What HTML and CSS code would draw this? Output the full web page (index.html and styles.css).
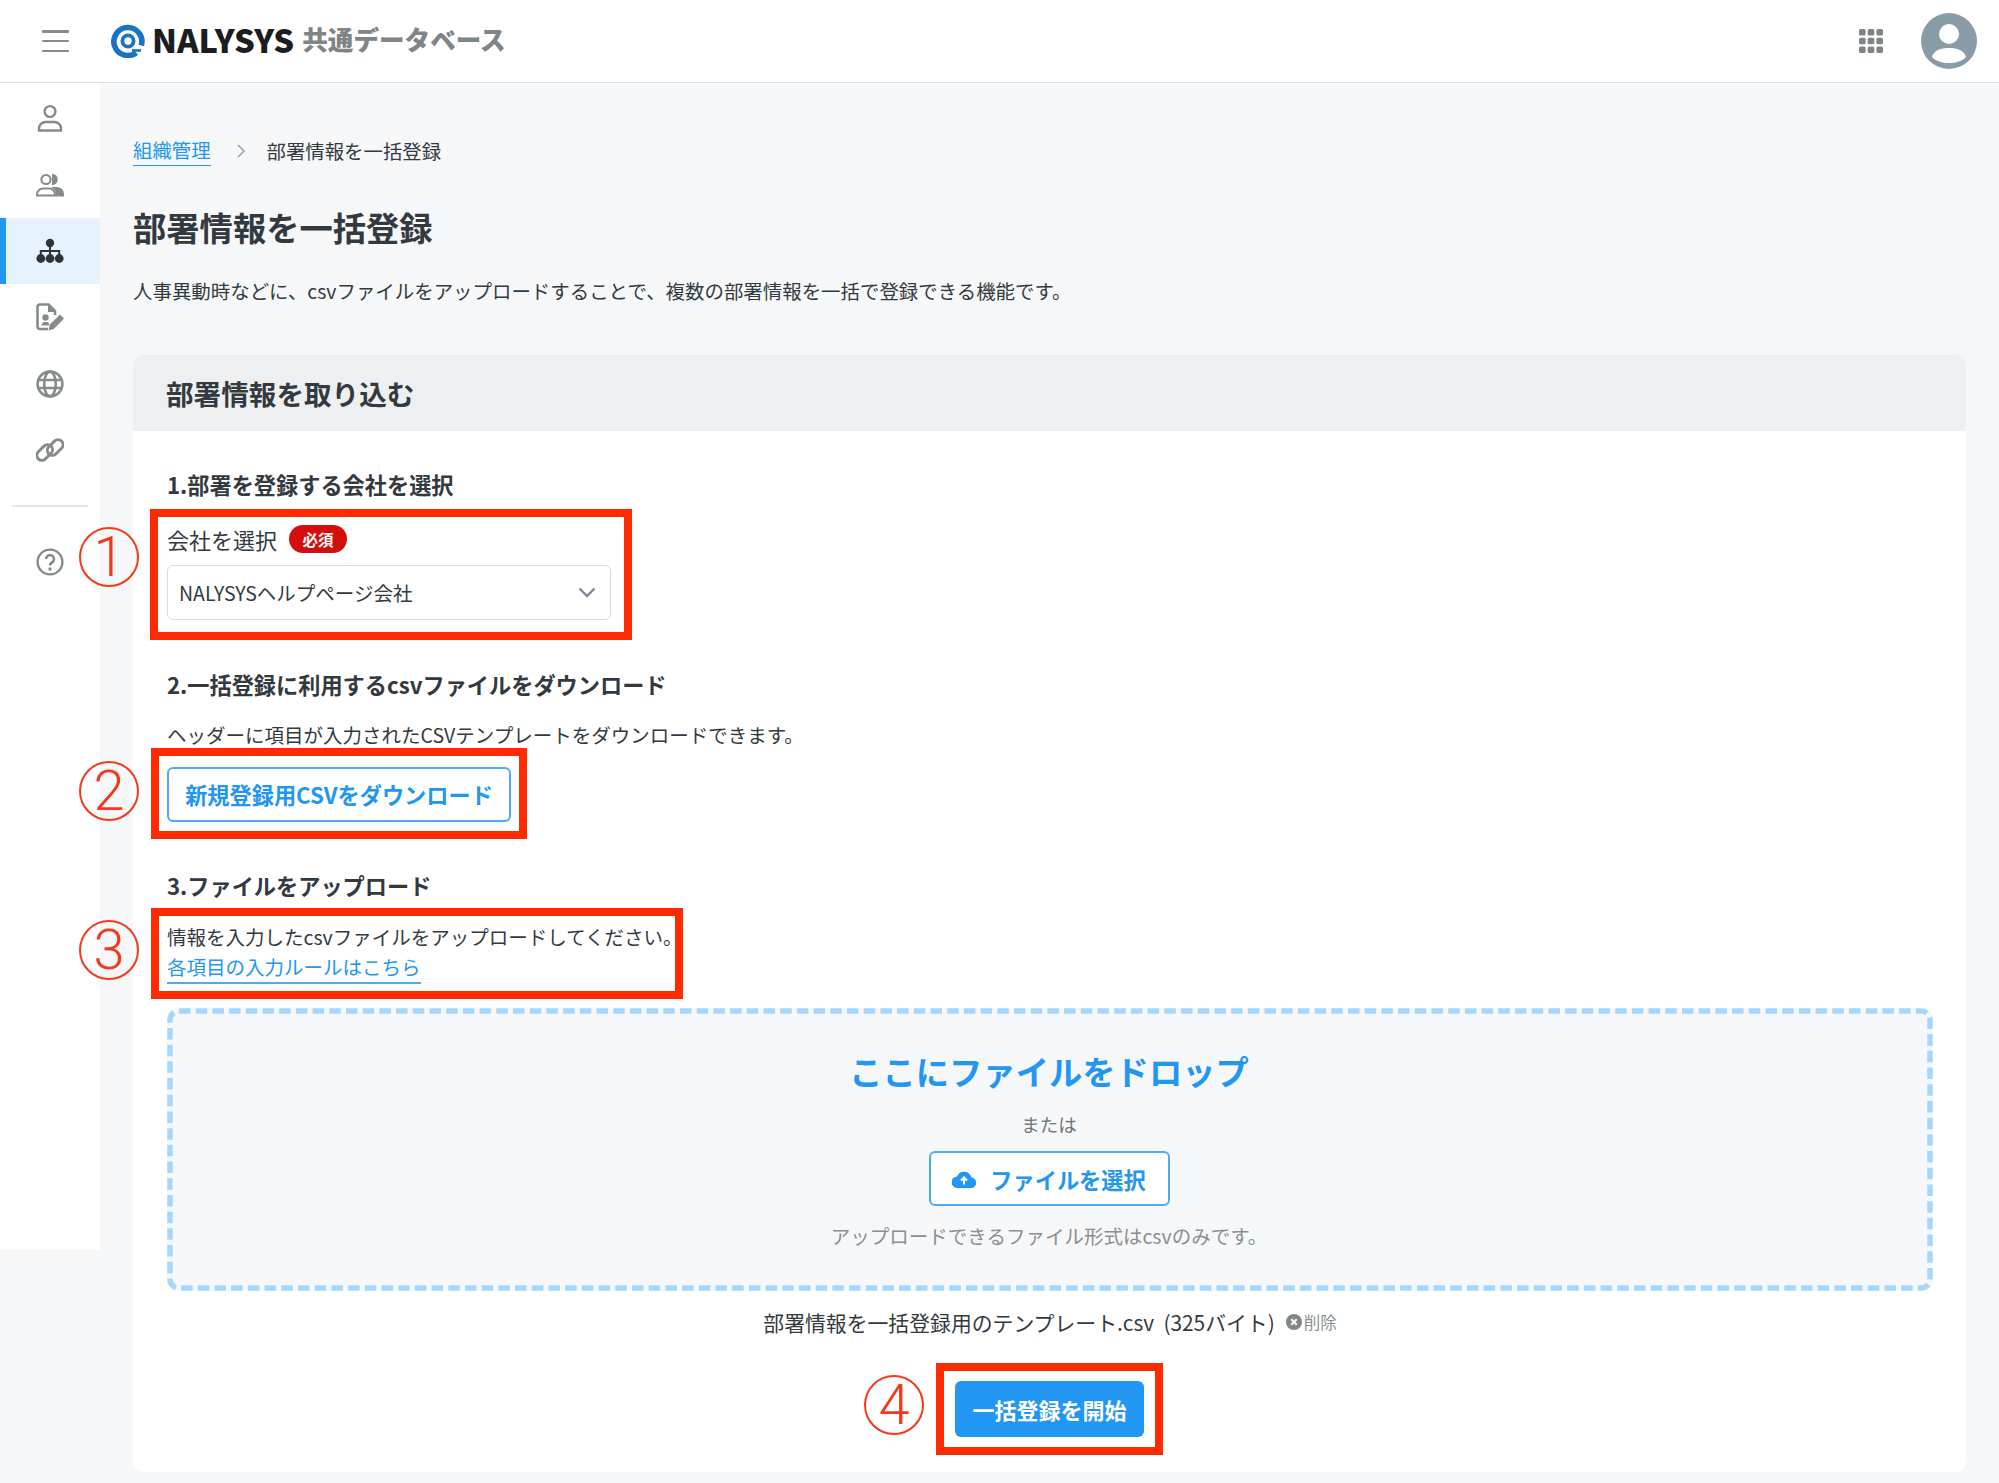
FILE: index.html
```html
<!DOCTYPE html>
<html lang="ja">
<head>
<meta charset="utf-8">
<title>部署情報を一括登録</title>
<link rel="stylesheet" href="styles.css">
</head>
<body>
<div class="stage">
  <header class="topbar">
    <button class="menu-btn" aria-label="menu"><span></span><span></span><span></span></button>
    <div class="brand">
      <svg class="brand-mark" viewBox="0 0 34 34"><path d="M25.300 28.700A14 14 0 1 1 30.300 21.500" fill="none" stroke="#1a73c4" stroke-width="5.600"/><circle cx="17" cy="17" r="5.600" fill="none" stroke="#1a73c4" stroke-width="3.800"/><path d="M21 26.500h9" stroke="#1a73c4" stroke-width="2.600"/></svg>
      <span class="brand-name">NALYSYS</span>
      <span class="brand-sub">共通データベース</span>
    </div>
    <div class="top-right">
      <svg class="apps" viewBox="0 0 24 24" fill="#7d8587"><rect x="0" y="0" width="6.600" height="6.600" rx="1.600"/><rect x="8.700" y="0" width="6.600" height="6.600" rx="1.600"/><rect x="17.400" y="0" width="6.600" height="6.600" rx="1.600"/><rect x="0" y="8.700" width="6.600" height="6.600" rx="1.600"/><rect x="8.700" y="8.700" width="6.600" height="6.600" rx="1.600"/><rect x="17.400" y="8.700" width="6.600" height="6.600" rx="1.600"/><rect x="0" y="17.400" width="6.600" height="6.600" rx="1.600"/><rect x="8.700" y="17.400" width="6.600" height="6.600" rx="1.600"/><rect x="17.400" y="17.400" width="6.600" height="6.600" rx="1.600"/></svg>
      <svg class="avatar" viewBox="0 0 56 56"><circle cx="28" cy="28" r="28" fill="#8a9ba8"/><circle cx="28" cy="21" r="10" fill="#fff"/><path d="M11 44c2-7 9-9 17-9s15 2 17 9c-4 4-10 6-17 6s-13-2-17-6z" fill="#fff"/></svg>
    </div>
  </header>
  <div class="shell">
    <nav class="sidebar">
      <a class="nav-item"><svg class="nav-icon" viewBox="0 0 28 28" fill="none" stroke="#858b8d" stroke-width="2.400"><circle cx="14" cy="7.500" r="5.400"/><path d="M3 26.500v-1.800a6.700 6.700 0 0 1 6.700-6.700h8.600a6.700 6.700 0 0 1 6.700 6.700v1.800z"/></svg></a>
      <a class="nav-item"><svg class="nav-icon" viewBox="0 0 28 28" fill="none" stroke="#858b8d" stroke-width="2"><circle cx="10" cy="8.500" r="4.600"/><path d="M1 24.500v-1a6 6 0 0 1 6-6h6a6 6 0 0 1 6 6v1z"/><path d="M17 4a4.600 4.600 0 0 1 0 9z" fill="#858b8d"/><path d="M18 17h3a6 6 0 0 1 6 6v1.500h-6c0-3-1-6-3-7.500z" fill="#858b8d"/></svg></a>
      <a class="nav-item is-active"><svg class="nav-icon" viewBox="0 0 28 28" fill="#2f3438"><circle cx="14" cy="6" r="4.200"/><circle cx="4.800" cy="21.500" r="4.400"/><circle cx="14" cy="21.500" r="4.400"/><circle cx="23.200" cy="21.500" r="4.400"/><path d="M13 9h2v4h9.200v5h-2v-3H15v3h-2v-3H5.800v3h-2v-5H13z"/></svg></a>
      <a class="nav-item"><svg class="nav-icon" viewBox="0 0 28 28" fill="none"><path d="M12 26H4A2.500 2.500 0 0 1 1.500 23.500V4A2.500 2.500 0 0 1 4 1.500h8.500l6.500 6.500v4" stroke="#858b8d" stroke-width="2.600"/><path d="M12 1.500v7.500h7z" fill="#858b8d"/><circle cx="9.500" cy="14.500" r="3.200" fill="#858b8d"/><path d="M5 22.500l2.500-3.500h4.500l1.500 3.500z" fill="#858b8d"/><path d="M12.500 27.500l1.300-6L24 11.500l4 4L17.800 26z" fill="#858b8d"/></svg></a>
      <a class="nav-item"><svg class="nav-icon" viewBox="0 0 28 28" fill="none" stroke="#858b8d" stroke-width="2.600"><circle cx="14" cy="14" r="12.400"/><ellipse cx="14" cy="14" rx="5.800" ry="12.400"/><path d="M2.500 10h23M2.500 18h23"/></svg></a>
      <a class="nav-item"><svg class="nav-icon" viewBox="0 0 28 28" fill="none" stroke="#858b8d" stroke-width="2.900"><rect x="-9" y="-5" width="18" height="10" rx="5" transform="translate(8.700 16.500) rotate(-45)"/><rect x="-9" y="-5" width="18" height="10" rx="5" transform="translate(19.200 11.500) rotate(-45)"/></svg></a>
      <div class="nav-divider"></div>
      <a class="nav-item nav-help"><svg class="nav-icon" viewBox="0 0 28 28" fill="none" stroke="#858b8d" stroke-width="2.400"><circle cx="14" cy="14" r="12.400"/><path d="M10 11a4 4 0 1 1 6 3.500c-1.400.8-2 1.500-2 3" stroke-width="2.600"/><circle cx="14" cy="21" r="1.700" fill="#858b8d" stroke="none"/></svg></a>
    </nav>
    <main class="content">
      <div class="crumbs"><a class="crumb-link">組織管理</a><svg class="crumb-sep" viewBox="0 0 8 14" fill="none" stroke="#9aa0a4" stroke-width="1.500"><path d="M1 1l6 6-6 6"/></svg><span>部署情報を一括登録</span></div>
      <h1 class="page-title">部署情報を一括登録</h1>
      <p class="page-desc">人事異動時などに、csvファイルをアップロードすることで、複数の部署情報を一括で登録できる機能です。</p>
      <section class="card">
        <h2 class="card-head">部署情報を取り込む</h2>
        <div class="card-body">
          <h3 class="step step-1">1.部署を登録する会社を選択</h3>
          <div class="field-label"><span>会社を選択</span><span class="required">必須</span></div>
          <div class="select"><span>NALYSYSヘルプページ会社</span><svg class="chev" viewBox="0 0 18 11" fill="none" stroke="#7d8b96" stroke-width="2.400"><path d="M1.500 1.500L9 9l7.500-7.500"/></svg></div>
          <h3 class="step step-2">2.一括登録に利用するcsvファイルをダウンロード</h3>
          <p class="step-text step-text-2">ヘッダーに項目が入力されたCSVテンプレートをダウンロードできます。</p>
          <a class="btn btn-outline btn-download">新規登録用CSVをダウンロード</a>
          <h3 class="step step-3">3.ファイルをアップロード</h3>
          <p class="step-text step-text-3">情報を入力したcsvファイルをアップロードしてください。</p>
          <p class="rule-line"><a class="rule-link">各項目の入力ルールはこちら</a></p>
          <div class="dropzone">
            <svg class="dash" width="1766" height="283"><rect x="3" y="3" width="1760" height="277" rx="9" fill="none" stroke="#a6d6fb" stroke-width="5.500" stroke-dasharray="11.500 5.200"/></svg>
            <div class="drop-title">ここにファイルをドロップ</div>
            <div class="drop-or">または</div>
            <a class="btn btn-outline btn-file"><svg class="cloud" viewBox="0 0 24 18"><path d="M19.300 7.600A7.500 7.500 0 0 0 5 6.400 5.700 5.700 0 0 0 5.700 18h13a5 5 0 0 0 .6-10.400z" fill="#2196f3"/><path d="M12 14.500v-6M9 10.500l3-3 3 3" stroke="#fff" stroke-width="2" fill="none"/></svg><span>ファイルを選択</span></a>
            <div class="drop-note">アップロードできるファイル形式はcsvのみです。</div>
          </div>
          <div class="file-line"><span>部署情報を一括登録用のテンプレート.csv &nbsp;(325バイト)</span><svg class="del-icon" viewBox="0 0 16 16"><circle cx="8" cy="8" r="8" fill="#80868a"/><path d="M5.300 5.300l5.400 5.400M10.700 5.300l-5.400 5.400" stroke="#fff" stroke-width="2"/></svg><span class="del-text">削除</span></div>
          <div class="submit-row"><a class="btn btn-primary">一括登録を開始</a></div>
        </div>
      </section>
    </main>
  </div>
  <div class="mark box-1"></div><div class="num num-1">1</div>
  <div class="mark box-2"></div><div class="num num-2">2</div>
  <div class="mark box-3"></div><div class="num num-3">3</div>
  <div class="mark box-4"></div><div class="num num-4">4</div>
</div>
</body>
</html>
```
FILE: styles.css
```css
* { box-sizing: border-box; }
html, body { margin: 0; padding: 0; }
body { background: #f6f7f9; color: #333a3f; font-family: "Noto Sans CJK JP", "Noto Sans", sans-serif; }
h1, h2, h3, p { margin: 0; }
.stage { position: relative; width: 1999px; height: 1483px; overflow: hidden; }

.topbar { height: 83px; background: #fff; border-bottom: 1px solid #d9e0e6; display: flex; align-items: center; padding: 0 22px 0 42px; }
.menu-btn { width: 27px; height: 22px; padding: 0; border: 0; background: none; display: flex; flex-direction: column; justify-content: space-between; }
.menu-btn span { display: block; height: 2.500px; background: #858b8d; border-radius: 1px; }
.brand { display: flex; align-items: center; margin-left: 42px; }
.brand-mark { width: 34px; height: 34px; }
.brand-name { margin: 0 0 5px 7px; font-size: 32.700px; font-weight: 900; color: #1b1d20; line-height: 40px; }
.brand-sub { margin: 0 0 4px 8px; font-size: 25.600px; font-weight: 900; color: #7f8487; line-height: 40px; }
.top-right { margin-left: auto; display: flex; align-items: center; gap: 38px; }
.apps { width: 24px; height: 24px; }
.avatar { width: 56px; height: 56px; }

.shell { display: flex; align-items: flex-start; }
.sidebar { width: 100px; height: 1167px; background: #fff; padding-top: 2px; flex: none; }
.nav-item { height: 66.400px; display: flex; align-items: center; justify-content: center; border-left: 6px solid transparent; padding-right: 6px; }
.nav-item.is-active { background: #e6f3fe; border-left-color: #2196f3; }
.nav-icon { width: 28px; height: 28px; }
.nav-divider { height: 2px; margin: 22px 12px 0; background: #dde6ec; }
.nav-help { margin-top: 21px; }

.content { flex: 1; min-width: 0; padding: 53px 33px 0; }
.crumbs { display: flex; align-items: center; font-size: 19.400px; line-height: 28px; }
.crumb-link { color: #2196f3; border-bottom: 1.500px solid #2196f3; line-height: 28px; height: 30px; }
.crumb-sep { width: 8px; height: 14px; margin: 0 22px 0 26px; }
.page-title { margin-top: 39px; font-size: 33.300px; font-weight: 700; line-height: 44px; }
.page-desc { margin-top: 28px; font-size: 19.450px; line-height: 28px; }

.card { margin-top: 49.500px; background: #fff; border-radius: 10px; overflow: hidden; }
.card-head { height: 76px; padding-left: 33px; background: #eeeff1; font-size: 27.600px; font-weight: 700; line-height: 76px; }
.card-body { padding: 38px 33px 34.500px 34px; }
.step { font-size: 22.200px; font-weight: 700; line-height: 30px; }
.step-2 { margin-top: 49px; }
.step-3 { margin-top: 48px; }
.field-label { margin-top: 25px; display: flex; align-items: center; font-size: 22px; line-height: 30px; }
.required { margin-left: 12px; width: 58px; height: 28px; border-radius: 14px; background: #d40d0d; color: #fff; font-size: 15.500px; font-weight: 700; line-height: 28px; text-align: center; }
.select { margin-top: 11px; width: 444px; height: 55px; padding: 0 14px 0 11px; border: 1.500px solid #d5dce2; border-radius: 6px; background: #fff; display: flex; align-items: center; justify-content: space-between; font-size: 19.500px; }
.chev { width: 18px; height: 11px; }
.step-text { font-size: 19.500px; line-height: 28px; }
.step-text-2 { margin-top: 22px; }
.step-text-3 { margin-top: 22px; line-height: 30px; }
.rule-line { font-size: 19.500px; line-height: 30px; height: 31px; }
.rule-link { color: #2196f3; display: inline-block; height: 32px; border-bottom: 2px solid #4eaaf5; }

.btn { display: inline-flex; align-items: center; justify-content: center; border-radius: 6px; font-weight: 700; }
.btn-outline { background: #fff; border: 2px solid #4eaaf5; color: #2196f3; }
.btn-download { margin-top: 18px; width: 344px; height: 55px; font-size: 22.200px; }
.btn-file { width: 241px; height: 55px; font-size: 22.200px; gap: 14px; margin-top: 14px; }
.cloud { width: 24px; height: 18px; }
.btn-primary { width: 189px; height: 56px; background: #2196f3; color: #fff; font-size: 22px; }

.dropzone { position: relative; margin-top: 25px; height: 283px; padding: 38.500px 2px 0 0; border-radius: 10px; background: #f6f7f9; display: flex; flex-direction: column; align-items: center; }
.dash { position: absolute; left: 0; top: 0; }
.drop-title { font-size: 33.300px; font-weight: 700; line-height: 50px; color: #2196f3; }
.drop-or { margin-top: 15px; font-size: 18.500px; line-height: 26px; color: #70767a; }
.drop-note { margin-top: 17px; font-size: 19.500px; line-height: 26px; color: #8a8f93; }

.file-line { margin-top: 17px; display: flex; align-items: center; justify-content: center; font-size: 20.850px; line-height: 28px; }
.del-icon { width: 16px; height: 16px; margin-left: 11px; }
.del-text { font-size: 16.500px; color: #8a8f93; margin-left: 2px; }
.submit-row { margin-top: 45.500px; padding-right: 1px; display: flex; justify-content: center; }

.mark { position: absolute; border: 8px solid #ff2a00; }
.box-1 { left: 150px; top: 509px; width: 482px; height: 131px; }
.box-2 { left: 151px; top: 748px; width: 376px; height: 91px; }
.box-3 { left: 151px; top: 908px; width: 532px; height: 91px; }
.box-4 { left: 936px; top: 1363px; width: 227px; height: 92px; }
.num { position: absolute; width: 60px; height: 60px; border: 2px solid #f5381a; border-radius: 50%; color: #f5381a; font-family: Roboto, sans-serif; font-weight: 300; font-size: 56px; line-height: 56px; text-align: center; }
.num-1 { left: 79px; top: 527px; }
.num-2 { left: 79px; top: 761px; }
.num-3 { left: 79px; top: 920px; }
.num-4 { left: 864px; top: 1375px; }
```
